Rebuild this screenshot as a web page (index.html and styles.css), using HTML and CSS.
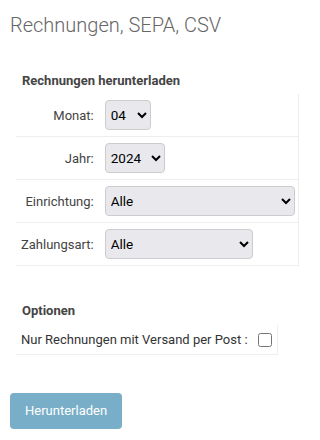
FILE: index.html
```html
<!DOCTYPE html>
<html lang="de">
<head>
<meta charset="utf-8">
<title>Rechnungen, SEPA, CSV</title>
<link rel="stylesheet" href="styles.css">
</head>
<body>
<div class="page">
  <h1 class="title">Rechnungen, SEPA, CSV</h1>
  <form class="form">
    <h2 class="section-title">Rechnungen herunterladen</h2>
    <table class="fields">
      <tr>
        <td class="label">Monat:</td>
        <td class="field"><select class="sel sel-month"><option>04</option></select></td>
      </tr>
      <tr>
        <td class="label">Jahr:</td>
        <td class="field"><select class="sel sel-year"><option>2024</option></select></td>
      </tr>
      <tr>
        <td class="label">Einrichtung:</td>
        <td class="field"><select class="sel sel-wide"><option>Alle</option></select></td>
      </tr>
      <tr>
        <td class="label">Zahlungsart:</td>
        <td class="field"><select class="sel sel-mid"><option>Alle</option></select></td>
      </tr>
    </table>

    <h2 class="section-title options-title">Optionen</h2>
    <table class="options">
      <tr>
        <td class="option-cell"><label class="option-label"><span>Nur Rechnungen mit Versand per Post :</span><input type="checkbox" class="check"></label></td>
      </tr>
    </table>

    <button type="button" class="button">Herunterladen</button>
  </form>
</div>
</body>
</html>
```

FILE: styles.css
```css
html, body {
  margin: 0;
  padding: 0;
  background: #fff;
}

body {
  font-family: Roboto, "Liberation Sans", sans-serif;
  color: #333;
  font-size: 13px;
}

.page {
  padding: 13px 10px 0 10px;
}

.title {
  margin: 0;
  font-size: 20px;
  line-height: 24px;
  font-weight: 300;
  color: #666;
}

.form {
  margin: 0;
  padding: 0 0 0 6px;
}

.section-title {
  margin: 36px 0 0 6px;
  font-size: 13px;
  line-height: 16px;
  font-weight: 700;
  color: #444;
}

.fields {
  margin-top: 5px;
  border-collapse: collapse;
  width: 283px;
  border-right: 1px solid #eee;
}

.fields td {
  border-bottom: 1px solid #eee;
  height: 42px;
  padding: 0;
  vertical-align: middle;
}

.fields .label {
  width: 72px;
  padding: 0 6px 0 5px;
  text-align: right;
  font-size: 13px;
  color: #444;
  white-space: nowrap;
}

.fields .field {
  padding-left: 5px;
}

.sel {
  display: block;
  height: 30px;
  box-sizing: border-box;
  background-color: #e9e9ed;
  border: 1px solid #ccc;
  border-radius: 4px;
  font-family: Roboto, "Liberation Sans", sans-serif;
  font-size: 13.5px;
  font-weight: 400;
  color: #000;
  padding: 0 3px 0 1px;
}

.sel-month { width: 46px; }
.sel-year { width: 60px; }
.sel-wide { width: 190px; }
.sel-mid { width: 148px; }

.options-title {
  margin-top: 37px;
}

.options {
  margin-top: 6px;
  border-collapse: collapse;
  border-right: 1px solid #eee;
}

.option-cell {
  border-bottom: 1px solid #eee;
  height: 29px;
  padding: 0 2px 0 5px;
  vertical-align: middle;
}

.option-label {
  display: flex;
  align-items: center;
  gap: 6px;
  font-size: 13px;
  color: #333;
  white-space: nowrap;
}

.check {
  margin: 0 3px 0 4px;
  width: 14px;
  height: 14px;
}

.button {
  display: block;
  margin: 38px 0 0 -6px;
  background: #79aec8;
  color: #fff;
  border: none;
  border-radius: 4px;
  padding: 10px 15px;
  height: 36px;
  font-family: Roboto, "Liberation Sans", sans-serif;
  font-size: 13px;
  line-height: 16px;
}
```
